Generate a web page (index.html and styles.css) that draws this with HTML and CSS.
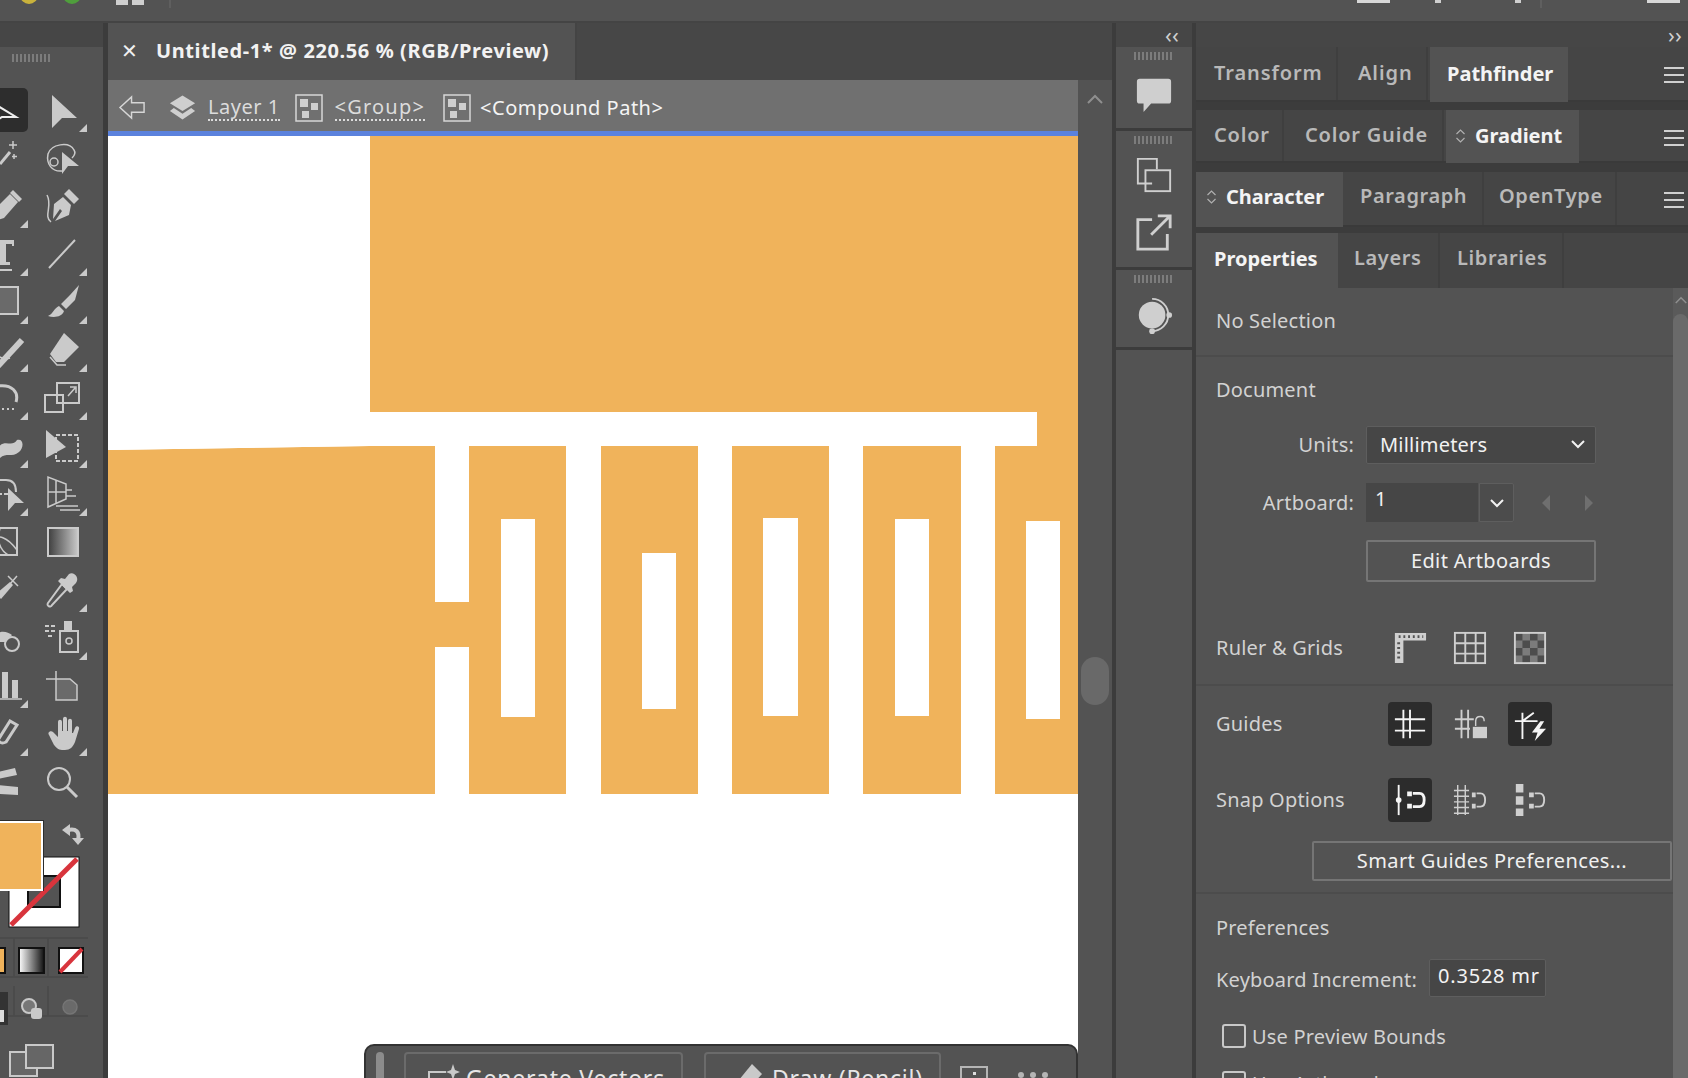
FILE: index.html
```html
<!DOCTYPE html>
<html lang="en">
<head>
  <meta charset="UTF-8" />
  <title>Untitled-1* @ 220.56 % (RGB/Preview)</title>
  <link rel="stylesheet" href="styles.css">
</head>
<body>
  <div class="topbar">
    <span class="light light-yellow"></span>
    <span class="light light-green"></span>
    <span class="top-blocks"><i></i><i></i></span>
    <span class="top-div"></span>
    <span class="top-spacer"></span>
    <span class="top-rect"></span>
    <span class="top-dot"></span>
    <span class="top-dot top-dot-2"></span>
    <span class="top-div top-div-2"></span>
    <span class="top-rect top-rect-last"></span>
  </div>

  <div class="main">
    <!-- tools -->
    <div class="toolbar">
      <div class="bar-head"></div>
      <div class="grip tool-grip"></div>
      <div class="tools">
        <div class="tool tool-on"><svg class="ico" viewBox="0 0 40 40"><path class="ln" d="M2 10 L30 27 L16 27 L2 36"/></svg></div>
        <div class="tool more"><svg class="ico" viewBox="0 0 40 40"><path class="fl" d="M10 5 L35 28 L20 28 L10 38Z"/></svg></div>

        <div class="tool"><svg class="ico" viewBox="0 0 40 40"><path class="ln thick" d="M12 26 L22 14"/><path class="ln thin" d="M25 3v8M21 7h8M26 16v5M24 18.500h5"/></svg></div>
        <div class="tool"><svg class="ico" viewBox="0 0 40 40"><path class="ln thin" d="M20 33 C10 34 4 26 6 16 C9 6 27 3 32 12 C34 15 32 18 30 20"/><circle class="ln thin" cx="12" cy="24" r="4"/><path class="fl" d="M20 14 L37 28 L26 28 L20 36Z"/></svg></div>

        <div class="tool more"><svg class="ico" viewBox="0 0 40 40"><path class="fl" d="M22 8 L30 16 L16 32 L2 36 L8 22Z"/><path class="fl" d="M25 4 L34 13 L31 16 L22 7Z"/></svg></div>
        <div class="tool"><svg class="ico" viewBox="0 0 40 40"><path class="fl" d="M21 11 L29 19 L27 29 L13 35 L20 25 L18 23 L11 33 L12 18Z"/><path class="fl" d="M27 3 L37 13 L32 18 L22 8Z"/><path class="ln thin" d="M9 36 C1 30 11 20 5 9"/></svg></div>

        <div class="tool more"><svg class="ico" viewBox="0 0 40 40"><path class="fl" d="M4 6h22v6h-2v-2h-6v18h4v3H6v-3h4V10H4Z"/><path class="ln" d="M0 36h24"/></svg></div>
        <div class="tool more"><svg class="ico" viewBox="0 0 40 40"><path class="ln" d="M7 34 L33 6"/></svg></div>

        <div class="tool more"><svg class="ico" viewBox="0 0 40 40"><rect class="grey-fill ln" x="0" y="5" width="30" height="27"/></svg></div>
        <div class="tool more"><svg class="ico" viewBox="0 0 40 40"><path class="fl" d="M37 3 L33 18 L24 27 L19 22 L28 13Z"/><path class="fl" d="M17 24 L22 29 C20 35 12 36 6 34 C11 32 12 26 17 24Z"/></svg></div>

        <div class="tool more"><svg class="ico" viewBox="0 0 40 40"><path class="wide-ln" d="M10 36 L34 10"/><path class="ln thin" d="M8 24 C12 28 16 30 22 28"/></svg></div>
        <div class="tool more"><svg class="ico" viewBox="0 0 40 40"><path class="fl" d="M22 3 L37 17 L22 32 L14 32 L8 24Z"/><path class="ln thin" d="M8 27 L15 35 H24"/></svg></div>

        <div class="tool more"><svg class="ico" viewBox="0 0 40 40"><path class="ln thick" d="M10 8 C24 6 31 14 28 24"/><path class="ln dotted" d="M26 31 H10"/></svg></div>
        <div class="tool more"><svg class="ico" viewBox="0 0 40 40"><rect class="ln" x="15" y="5" width="22" height="20"/><rect class="ln" x="3" y="17" width="18" height="17"/><path class="ln thin" d="M26 18 L33 10M28 9h6v6"/></svg></div>

        <div class="tool more"><svg class="ico" viewBox="0 0 40 40"><path class="fl" d="M10 22 C16 12 24 22 29 14 C36 12 36 22 31 26 C24 32 18 26 12 32Z"/></svg></div>
        <div class="tool more"><svg class="ico" viewBox="0 0 40 40"><rect class="ln dash" x="14" y="9" width="22" height="26"/><path class="fl" d="M4 4 L24 21 L4 32Z"/></svg></div>

        <div class="tool more"><svg class="ico" viewBox="0 0 40 40"><path class="ln" d="M8 6 H18 C26 6 28 12 28 18"/><path class="ln dash" d="M10 20 H22"/><path class="fl" d="M20 14 L36 29 L27 29 L20 37Z"/></svg></div>
        <div class="tool more"><svg class="ico" viewBox="0 0 40 40"><path class="ln thin" d="M6 3 V33 L24 25 V10Z M6 18 H24 M14 6 V30"/><path class="ln thin" d="M24 16h6M24 22h10M14 32h22M18 36h20"/></svg></div>

        <div class="tool"><svg class="ico" viewBox="0 0 40 40"><rect class="ln" x="0" y="6" width="29" height="27"/><path class="ln thin" d="M0 20 C10 10 20 16 29 28M12 7 C8 18 12 28 20 33"/></svg></div>
        <div class="tool"><svg class="ico" viewBox="0 0 40 40"><defs><linearGradient id="gt" x1="0" x2="1" y1="0" y2="0"><stop offset="0" stop-color="#3e3e3e"/><stop offset="1" stop-color="#c8c8c8"/></linearGradient></defs><rect class="grad-tool" x="6" y="6" width="30" height="28" fill="url(#gt)"/></svg></div>

        <div class="tool"><svg class="ico" viewBox="0 0 40 40"><path class="fl" d="M8 24 L22 12 L25 15 L13 29Z"/><path class="ln thin" d="M20 6 L30 16M29 6 L22 14"/></svg></div>
        <div class="tool more"><svg class="ico" viewBox="0 0 40 40"><path class="ln" d="M6 33 C4 36 9 38 10 35 L25 19 L20 14Z"/><path class="fl" d="M27 4 C32 1 38 8 34 13 L30 17 L31 21 L28 23 L16 11 L19 8 L23 9Z"/></svg></div>

        <div class="tool"><svg class="ico" viewBox="0 0 40 40"><path class="fl" d="M8 16 C14 12 20 14 24 17 L18 24 H8Z"/><circle class="ln" cx="24" cy="26" r="7"/></svg></div>
        <div class="tool more"><svg class="ico" viewBox="0 0 40 40"><path class="ln dash" d="M3 8h12M3 13h10M6 18h6"/><path class="fl" d="M22 3h8v9h-8Z"/><rect class="ln" x="18" y="13" width="18" height="21"/><circle class="ln thin" cx="27" cy="23" r="3"/></svg></div>

        <div class="tool more"><svg class="ico" viewBox="0 0 40 40"><path class="fl" d="M14 6h6v26h-6ZM24 14h6v18h-6Z"/><path class="ln thin" d="M8 33h26"/></svg></div>
        <div class="tool"><svg class="ico" viewBox="0 0 40 40"><path class="grey-fill" d="M14 13H28L35 19V34H14Z"/><path class="ln thin" d="M14 5V13H28L35 19V34H14V13M4 13H14"/></svg></div>

        <div class="tool more"><svg class="ico" viewBox="0 0 40 40"><path class="ln thick" d="M10 26 L22 7 L29 11 L18 28 C14 30 12 29 10 26Z"/></svg></div>
        <div class="tool more"><svg class="ico" viewBox="0 0 40 40"><path class="fl" d="M16 8c0-3 4-3 4 0v9h1V5c0-3 4-3 4 0v12h1V7c0-3 4-3 4 0v12l1 0 2-5c1-3 5-2 4 1l-4 13c-2 5-5 8-10 8h-3c-4 0-6-3-8-5L7 21c-2-3 2-5 4-3l5 5Z"/></svg></div>

        <div class="tool"><svg class="ico" viewBox="0 0 40 40"><path class="fl" d="M10 10 L27 6 L29 13 L10 17ZM10 23 L30 25 L30 33 L10 32Z"/></svg></div>
        <div class="tool"><svg class="ico" viewBox="0 0 40 40"><circle class="ln" cx="17" cy="17" r="11"/><path class="ln thick" d="M25 25 L35 35"/></svg></div>
      </div>

      <svg class="swatches" viewBox="0 0 103 258" width="103" height="258">
        <path class="swap-arrow" d="M68 10 C76 8 80 12 78 20"/>
        <path class="swap-head" d="M62 10 L70 4 V16Z M72 18 H84 L78 25Z"/>
        <rect x="9" y="37" width="70" height="70" fill="#fff" stroke="#111" stroke-width="1"/>
        <rect x="28" y="56" width="32" height="31" fill="#535353" stroke="#111" stroke-width="2"/>
        <path d="M11 105 L77 39" stroke="#d8343c" stroke-width="5"/>
        <rect x="-6" y="-1" width="50" height="72" fill="#2c2c2c"/>
        <rect x="-4" y="2" width="46" height="68" fill="#f0b35b" stroke="#fff" stroke-width="2"/>
        <path d="M0 118 H88 M0 157 H88 M0 196 H88 M14 118 V157 M48 118 V157 M14 166 V196 M48 166 V196" stroke="#4a4a4a" stroke-width="1.5"/>
        <rect x="-4" y="128" width="9" height="25" fill="#f0b35b" stroke="#111" stroke-width="2"/>
        <defs>
          <linearGradient id="gr" x1="0" x2="1" y1="0" y2="0">
            <stop offset="0" stop-color="#fff"/>
            <stop offset="1" stop-color="#111"/>
          </linearGradient>
        </defs>
        <rect x="19" y="128" width="25" height="25" fill="url(#gr)" stroke="#111" stroke-width="2"/>
        <rect x="59" y="128" width="24" height="25" fill="#fff" stroke="#111" stroke-width="2"/>
        <path d="M60 152 L82 129" stroke="#d8343c" stroke-width="4"/>
        <rect x="0" y="172" width="8" height="33" fill="#333"/>
        <rect x="0" y="190" width="4" height="12" fill="#ddd"/>
        <circle cx="29" cy="186" r="7" fill="#777" stroke="#c9c9c9" stroke-width="2"/>
        <rect x="31" y="188" width="11" height="11" rx="3" fill="#c9c9c9"/>
        <circle cx="70" cy="187" r="7" fill="#6a6a6a" stroke="#757575" stroke-width="1.5"/>
        <rect x="10" y="232" width="27" height="24" fill="#666" stroke="#c9c9c9" stroke-width="2"/>
        <rect x="26" y="225" width="27" height="23" fill="#666" stroke="#c9c9c9" stroke-width="2"/>
      </svg>
    </div>

    <!-- document -->
    <div class="doc">
      <div class="doc-tabs">
        <div class="doc-tab">
          <span class="doc-close">&#x2715;</span>
          <span class="doc-title">Untitled-1* @ 220.56 % (RGB/Preview)</span>
        </div>
      </div>
      <div class="doc-body">
        <div class="doc-left">
          <div class="crumbs">
            <svg class="crumb-back" viewBox="0 0 30 28"><path d="M2 14 L14 3 V9 H27 V19 H14 V25Z"/></svg>
            <svg class="crumb-layers" viewBox="0 0 30 30"><path class="c-fill" d="M15 2 L28 10 L15 18 L2 10Z"/><path class="c-fill" d="M6 15 L15 21 L24 15 L28 18 L15 27 L2 18Z"/></svg>
            <span class="crumb-link crumb-layer">Layer 1</span>
            <svg class="crumb-box" viewBox="0 0 28 28"><rect class="c-line" x="1" y="1" width="26" height="26"/><rect class="c-fill" x="5" y="5" width="8" height="8"/><rect class="c-fill" x="16" y="9" width="7" height="7"/><rect class="c-fill" x="7" y="17" width="7" height="7"/></svg>
            <span class="crumb-link crumb-group">&lt;Group&gt;</span>
            <svg class="crumb-box" viewBox="0 0 28 28"><rect class="c-line" x="1" y="1" width="26" height="26"/><rect class="c-fill" x="5" y="5" width="8" height="8"/><rect class="c-fill" x="16" y="9" width="7" height="7"/><rect class="c-fill" x="7" y="17" width="7" height="7"/></svg>
            <span class="crumb-now">&lt;Compound Path&gt;</span>
          </div>
          <div class="canvas">
            <svg class="art" viewBox="108 136 970 942" width="970" height="942">
              <path class="orange" d="M370 136H1078V794H108V450L370 446Z"/>
              <g class="paper">
                <rect x="370" y="412" width="667" height="34"/>
                <path d="M108 446H370V446L108 450Z"/>
                <rect x="435" y="446" width="34" height="156"/>
                <rect x="435" y="647" width="34" height="147"/>
                <rect x="566" y="446" width="35" height="348"/>
                <rect x="698" y="446" width="34" height="348"/>
                <rect x="829" y="446" width="34" height="348"/>
                <rect x="961" y="446" width="34" height="348"/>
                <rect x="501" y="519" width="34" height="198"/>
                <rect x="642" y="553" width="34" height="156"/>
                <rect x="763" y="518" width="35" height="198"/>
                <rect x="895" y="519" width="34" height="197"/>
                <rect x="1026" y="521" width="34" height="198"/>
              </g>
            </svg>
            <div class="float-bar">
              <span class="float-handle"></span>
              <div class="float-btn float-gen">
                <svg class="float-ico" viewBox="0 0 34 30"><path class="ln" d="M20 8H3V30H24V16"/><path class="fl" d="M27 0l2 6 5 2-5 2-2 6-2-6-5-2 5-2Z"/></svg>
                <span>Generate Vectors</span>
              </div>
              <div class="float-btn float-draw">
                <svg class="float-ico" viewBox="0 0 34 30"><path class="fl" d="M20 0 L30 10 L12 30 L2 22Z"/></svg>
                <span>Draw (Pencil)</span>
              </div>
              <span class="float-frame"><i></i></span>
              <span class="float-dots"><i></i><i></i><i></i></span>
            </div>
          </div>
        </div>
        <div class="doc-scroll">
          <svg class="caret" viewBox="0 0 16 10"><path d="M1 9 L8 2 L15 9"/></svg>
          <div class="doc-thumb"></div>
        </div>
      </div>
    </div>

    <!-- icon dock -->
    <div class="dock">
      <div class="bar-head bar-left">&#x2039;&#x2039;</div>
      <div class="dock-sec dock-a">
        <div class="grip"></div>
        <svg class="dock-ico" viewBox="0 0 40 40"><path class="fl" d="M5 3H35Q38 3 38 6V26Q38 29 35 29H17L9 38V29H5Q2 29 2 26V6Q2 3 5 3Z"/></svg>
      </div>
      <div class="dock-sec dock-b">
        <div class="grip"></div>
        <svg class="dock-ico dock-ico-1" viewBox="0 0 40 40"><path class="ln" d="M18 29H3V3H23V14"/><rect class="ln" x="11" y="15" width="26" height="22"/></svg>
        <svg class="dock-ico dock-ico-2" viewBox="0 0 40 40"><path class="ln thick" d="M18 7H3V38H34V22"/><path class="ln thick" d="M17 23 L36 4M24 3H37V16"/></svg>
      </div>
      <div class="dock-sec dock-c">
        <div class="grip"></div>
        <svg class="dock-ico dock-ico-3" viewBox="0 0 40 40"><circle class="fl" cx="18" cy="20" r="14"/><path class="ln" d="M18 3 A17 17 0 0 1 35 20 A17 17 0 0 1 18 37"/><circle class="fl" cx="36" cy="20" r="3"/><circle class="fl" cx="18" cy="37" r="3"/></svg>
      </div>
      <div class="dock-sec dock-d"></div>
    </div>

    <!-- panels -->
    <div class="panels">
      <div class="bar-head bar-right">&#x203A;&#x203A;</div>

      <div class="tabrow row-1">
        <div class="tab tab-transform">Transform</div>
        <div class="tab tab-align">Align</div>
        <div class="tab tab-on tab-pathfinder">Pathfinder</div>
        <div class="burger"><i></i><i></i><i></i></div>
      </div>
      <div class="tabrow row-2">
        <div class="tab tab-color">Color</div>
        <div class="tab tab-guide">Color Guide</div>
        <div class="tab tab-on tab-gradient"><svg class="updown" viewBox="0 0 10 16"><path d="M1 6 L5 2 L9 6M1 10 L5 14 L9 10"/></svg>Gradient</div>
        <div class="burger"><i></i><i></i><i></i></div>
      </div>
      <div class="tabrow row-3">
        <div class="tab tab-on tab-character"><svg class="updown" viewBox="0 0 10 16"><path d="M1 6 L5 2 L9 6M1 10 L5 14 L9 10"/></svg>Character</div>
        <div class="tab tab-paragraph">Paragraph</div>
        <div class="tab tab-opentype">OpenType</div>
        <div class="burger"><i></i><i></i><i></i></div>
      </div>
      <div class="tabrow row-4">
        <div class="tab tab-on tab-properties">Properties</div>
        <div class="tab tab-layers">Layers</div>
        <div class="tab tab-libraries">Libraries</div>
      </div>

      <div class="props">
        <div class="props-main">
          <div class="sec sec-none">No Selection</div>

          <div class="sec sec-doc">
            <div class="sec-title">Document</div>
            <div class="form-row units-row">
              <span class="form-label">Units:</span>
              <div class="select">Millimeters<svg class="chev" viewBox="0 0 16 10"><path d="M2 2 L8 8 L14 2"/></svg></div>
            </div>
            <div class="form-row board-row">
              <span class="form-label">Artboard:</span>
              <div class="board-input">1</div>
              <div class="board-drop"><svg class="chev" viewBox="0 0 16 10"><path d="M2 2 L8 8 L14 2"/></svg></div>
              <span class="tri tri-l"></span>
              <span class="tri tri-r"></span>
            </div>
            <div class="btn edit-btn">Edit Artboards</div>
            <div class="icon-row ruler-row">
              <span class="icon-label">Ruler &amp; Grids</span>
              <span class="ibtn"><svg viewBox="0 0 36 36"><path class="fl" d="M2 2H35V10H11V34H2Z"/><path class="dark-ticks" d="M6 6H32M6 12V32"/></svg></span>
              <span class="ibtn"><svg viewBox="0 0 36 36"><rect class="ln" x="2" y="2" width="32" height="32"/><path class="ln" d="M2 13H34M2 24H34M13 2V34M24 2V34"/></svg></span>
              <span class="ibtn"><svg viewBox="0 0 36 36"><rect class="checker-bg" x="2" y="2" width="32" height="32"/><path class="checker" d="M2 2h8v8H2ZM18 2h8v8h-8ZM10 10h8v8h-8ZM26 10h8v8h-8ZM2 18h8v8H2ZM18 18h8v8h-8ZM10 26h8v8h-8ZM26 26h8v8h-8Z"/><rect class="ln" x="2" y="2" width="32" height="32"/></svg></span>
            </div>
          </div>

          <div class="sec sec-guides">
            <div class="icon-row guides-row">
              <span class="icon-label">Guides</span>
              <span class="ibtn ibtn-on"><svg viewBox="0 0 36 36"><path class="ln" d="M2 13H34M2 25H34M11 3V33M18 3V33"/></svg></span>
              <span class="ibtn"><svg viewBox="0 0 36 36"><path class="ln" d="M2 13H22M2 23H18M9 3V33M16 3V33"/><path class="ln thin" d="M24 20V15Q24 10 29 10Q33 10 33 15"/><rect class="fl" x="21" y="21" width="15" height="12"/></svg></span>
              <span class="ibtn ibtn-on"><svg viewBox="0 0 36 36"><path class="ln" d="M10 6V34M2 15H26M10 15L22 6"/><path class="fl" d="M29 15L20 27H26L23 36L35 23H28L33 15Z"/></svg></span>
            </div>
            <div class="icon-row snap-row">
              <span class="icon-label">Snap Options</span>
              <span class="ibtn ibtn-on"><svg viewBox="0 0 36 36"><path class="ln" d="M6 2V34"/><circle class="fl" cx="6" cy="18" r="3"/><path class="ln thick" d="M21 11H28Q33 11 33 18Q33 25 28 25H21"/><path class="fl" d="M15 9H20V14H15ZM15 22H20V27H15Z"/></svg></span>
              <span class="ibtn"><svg viewBox="0 0 36 36"><path class="ln thin" d="M5 2V34M13 2V34M1 8H17M1 14H17M1 20H17M1 26H17M1 32H17"/><path class="ln" d="M25 11H29Q34 11 34 18Q34 25 29 25H25"/><path class="fl" d="M20 10H24V15H20ZM20 22H24V27H20Z"/></svg></span>
              <span class="ibtn"><svg viewBox="0 0 36 36"><path class="fl" d="M3 1H11V10H3ZM3 14H11V23H3ZM3 27H11V35H3Z"/><path class="ln" d="M23 11H28Q33 11 33 18Q33 25 28 25H23"/><path class="fl" d="M17 10H22V15H17ZM17 22H22V27H17Z"/></svg></span>
            </div>
            <div class="btn smart-btn">Smart Guides Preferences...</div>
          </div>

          <div class="sec sec-prefs">
            <div class="sec-title">Preferences</div>
            <div class="key-row">
              <span class="key-label">Keyboard Increment:</span>
              <div class="key-input">0.3528 mr</div>
            </div>
            <div class="check-row">
              <span class="check"></span>
              <span>Use Preview Bounds</span>
            </div>
            <div class="check-row check-next">
              <span class="check"></span>
              <span>Use Artboard</span>
            </div>
          </div>
        </div>
        <div class="props-scroll">
          <svg class="caret caret-small" viewBox="0 0 16 10"><path d="M1 9 L8 2 L15 9"/></svg>
          <div class="props-thumb"></div>
        </div>
      </div>
    </div>
  </div>
</body>
</html>
```

FILE: styles.css
```css
* {
  box-sizing: border-box;
}

html, body {
  margin: 0;
  height: 100%;
}

body {
  width: 1688px;
  height: 1078px;
  overflow: hidden;
  background: #3c3c3c;
  font-family: "Noto Sans", sans-serif;
  font-size: 20px;
  letter-spacing: .2px;
  color: #d2d2d2;
}

/* shared svg bits */
.ln {
  fill: none;
  stroke: currentColor;
  stroke-width: 2;
}

.thin {
  stroke-width: 1.5;
}

.thick {
  stroke-width: 3;
}

.wide-ln {
  fill: none;
  stroke: currentColor;
  stroke-width: 6;
}

.dotted {
  stroke-dasharray: 2 3;
}

.dash {
  stroke-dasharray: 4 2;
}

.fl {
  fill: currentColor;
}

/* top bar */
.topbar {
  height: 23px;
  background: #535353;
  border-bottom: 2px solid #444;
  display: flex;
  align-items: flex-start;
  overflow: hidden;
}

.light {
  width: 18px;
  height: 18px;
  border-radius: 50%;
  margin-top: -14px;
}

.light-yellow {
  background: #c9b23c;
  margin-left: 20px;
}

.light-green {
  background: #4f9e3c;
  margin-left: 25px;
}

.top-blocks {
  display: flex;
  gap: 4px;
  margin-left: 35px;
}

.top-blocks i {
  width: 12px;
  height: 5px;
  background: #cfcfcf;
}

.top-div {
  width: 2px;
  height: 8px;
  background: #5f5f5f;
  margin-left: 25px;
}

.top-div-2 {
  margin-left: 19px;
}

.top-spacer {
  flex: 1;
}

.top-rect {
  width: 33px;
  height: 3px;
  background: #d8d8d8;
}

.top-dot {
  width: 6px;
  height: 3px;
  background: #cfcfcf;
  margin-left: 45px;
}

.top-dot-2 {
  margin-left: 74px;
}

.top-rect-last {
  margin-left: 105px;
  margin-right: 8px;
}

.main {
  display: flex;
  height: 1055px;
  overflow: hidden;
}

.bar-head {
  height: 24px;
  background: #464646;
}

.grip {
  width: 40px;
  height: 8px;
  background: repeating-linear-gradient(90deg, #7c7c7c 0 2px, transparent 2px 4px);
}

/* tools */
.toolbar {
  width: 103px;
  margin-right: 5px;
  background: #535353;
  overflow: hidden;
  color: #cacaca;
}

.tool-grip {
  margin: 7px 0 0 12px;
}

.tools {
  display: grid;
  grid-template-columns: 50px 50px;
  grid-auto-rows: 48px;
  column-gap: 4px;
  margin: 24px 0 0 -17px;
  width: 104px;
}

.tool {
  position: relative;
  display: flex;
  align-items: center;
  justify-content: center;
}

.tool-on {
  background: #2d2d2d;
  border-radius: 5px;
  margin: 2px 5px 2px 0;
  color: #eee;
}

.ico {
  width: 40px;
  height: 40px;
  overflow: visible;
}

.more::after {
  content: "";
  position: absolute;
  right: 0;
  bottom: 2px;
  border-style: solid;
  border-width: 0 0 8px 8px;
  border-color: transparent transparent #cacaca transparent;
}

.tool:nth-child(odd).more::after {
  right: 5px;
}

.grad-tool {
  stroke: #cacaca;
  stroke-width: 2;
}

.grey-fill {
  fill: #6a6a6a;
}

.swatches {
  display: block;
  margin-top: 14px;
}

.swap-arrow {
  fill: none;
  stroke: #cacaca;
  stroke-width: 4;
}

.swap-head {
  fill: #cacaca;
}

/* document */
.doc {
  width: 1004px;
  display: flex;
  flex-direction: column;
}

.doc-tabs {
  height: 57px;
  background: #474747;
  display: flex;
}

.doc-tab {
  width: 469px;
  background: #535353;
  display: flex;
  align-items: center;
  padding-bottom: 2px;
  border-right: 2px solid #444;
}

.doc-close {
  width: 48px;
  padding-right: 4px;
  text-align: center;
  font-size: 20px;
  color: #f0f0f0;
}

.doc-title {
  font-weight: 700;
  font-size: 20px;
  letter-spacing: .6px;
  color: #f2f2f2;
  white-space: nowrap;
}

.doc-body {
  flex: 1;
  display: flex;
  min-height: 0;
}

.doc-left {
  width: 970px;
  display: flex;
  flex-direction: column;
}

.crumbs {
  flex: none;
  height: 56px;
  background: #707070;
  border-bottom: 5px solid #5b82dd;
  display: flex;
  align-items: center;
  padding: 4px 0 0 10px;
  color: #dcdcdc;
}

.crumb-back {
  width: 29px;
  height: 27px;
  fill: none;
  stroke: #d6d6d6;
  stroke-width: 1.5;
}

.crumb-layers {
  width: 29px;
  height: 30px;
  margin-left: 21px;
}

.c-fill {
  fill: #cfcfcf;
}

.c-line {
  fill: none;
  stroke: #d6d6d6;
  stroke-width: 1.5;
}

.crumb-link {
  border-bottom: 2px dotted #dcdcdc;
  line-height: 25px;
}

.crumb-layer {
  margin-left: 11px;
  letter-spacing: .5px;
}

.crumb-box {
  width: 28px;
  height: 28px;
  margin-left: 15px;
}

.crumb-group {
  margin-left: 12px;
  letter-spacing: 1.2px;
}

.crumb-group + .crumb-box {
  margin-left: 18px;
}

.crumb-now {
  margin-left: 9px;
  letter-spacing: .5px;
  color: #f4f4f4;
}

.canvas {
  flex: 1;
  min-height: 0;
  position: relative;
  overflow: hidden;
  background: #fff;
}

.art {
  display: block;
}

.orange {
  fill: #f0b35b;
}

.paper {
  fill: #fff;
}

/* floating task bar, runs off the bottom */
.float-bar {
  position: absolute;
  left: 256px;
  right: 0;
  top: 908px;
  height: 60px;
  background: #535353;
  border: 2px solid #333;
  border-radius: 10px;
  display: flex;
  align-items: flex-start;
  padding-top: 6px;
  color: #e6e6e6;
}

.float-handle {
  width: 8px;
  height: 40px;
  margin-left: 10px;
  border-radius: 4px;
  background: #8c8c8c;
}

.float-btn {
  height: 50px;
  border: 2px solid #6b6b6b;
  border-radius: 4px;
  display: flex;
  align-items: flex-start;
  padding-top: 9px;
  line-height: 30px;
  white-space: nowrap;
  font-size: 23px;
  letter-spacing: .8px;
}

.float-gen {
  width: 279px;
  margin-left: 20px;
  padding-left: 20px;
}

.float-draw {
  width: 237px;
  margin-left: 21px;
  padding-left: 26px;
}

.float-ico {
  width: 34px;
  height: 30px;
  margin: 1px 6px 0 0;
  color: #c9c9c9;
}

.float-frame {
  width: 28px;
  height: 30px;
  margin: 14px 0 0 19px;
  border: 2px solid #b5b5b5;
  display: flex;
  justify-content: center;
  padding-top: 4px;
}

.float-frame i {
  width: 3px;
  height: 3px;
  background: #ddd;
}

.float-dots {
  display: flex;
  gap: 6px;
  margin: 20px 0 0 30px;
}

.float-dots i {
  width: 6px;
  height: 6px;
  border-radius: 50%;
  background: #b5b5b5;
}

.doc-scroll {
  width: 34px;
  background: #535353;
  display: flex;
  flex-direction: column;
  align-items: center;
}

.caret {
  width: 16px;
  height: 10px;
  margin-top: 14px;
  fill: none;
  stroke: #8f8f8f;
  stroke-width: 2;
}

.doc-thumb {
  width: 28px;
  height: 48px;
  margin-top: 553px;
  border-radius: 14px;
  background: #696969;
}

/* icon dock */
.dock {
  width: 76px;
  margin-left: 4px;
  display: flex;
  flex-direction: column;
  color: #cfcfcf;
}

.bar-left {
  flex: none;
  line-height: 22px;
  text-align: right;
  padding-right: 13px;
  font-size: 22px;
}

.dock-sec {
  background: #535353;
  display: flex;
  flex-direction: column;
  align-items: center;
  padding-top: 5px;
  margin-bottom: 3px;
}

.dock-a {
  height: 81px;
}

.dock-b {
  height: 136px;
}

.dock-c {
  height: 77px;
}

.dock-d {
  flex: 1;
  margin-bottom: 0;
}

.dock-ico {
  width: 38px;
  height: 38px;
  margin-top: 16px;
  overflow: visible;
}

.dock-ico-1 {
  margin-top: 12px;
}

.dock-ico-2 {
  margin-top: 19px;
}

.dock-ico-3 {
  margin-top: 13px;
}

/* panels */
.panels {
  width: 492px;
  margin-left: 4px;
  display: flex;
  flex-direction: column;
}

.bar-right {
  flex: none;
  line-height: 22px;
  text-align: right;
  padding-right: 6px;
  font-size: 22px;
  color: #d0d0d0;
}

.tabrow {
  flex: none;
  display: flex;
  position: relative;
  background: #454545;
  border-bottom: 2px solid #3a3a3a;
  color: #b9b9b9;
  font-weight: 600;
  letter-spacing: .6px;
}

.row-1 {
  height: 55px;
  margin-bottom: 8px;
  letter-spacing: .9px;
}

.row-2 {
  height: 53px;
  margin-bottom: 9px;
  letter-spacing: .8px;
}

.row-3 {
  height: 55px;
  margin-bottom: 6px;
}

.row-4 {
  height: 55px;
  border-bottom: 0;
}

.tab {
  display: flex;
  align-items: center;
  border-right: 2px solid #3f3f3f;
  margin-right: 2px;
  padding-left: 18px;
  padding-bottom: 2px;
  white-space: nowrap;
}

.row-3 .tab {
  padding-bottom: 6px;
}

.row-4 .tab {
  padding-bottom: 6px;
}

.tab-on,
.row-1 .tab-on,
.row-2 .tab-on {
  background: #535353;
  color: #f4f4f4;
  font-weight: 700;
  letter-spacing: 0;
  border-right: 0;
  margin-bottom: -2px;
}

.tab-transform { width: 142px; }
.tab-align { width: 88px; padding-left: 18px; }
.tab-pathfinder { width: 138px; padding-left: 17px; }
.tab-color { width: 88px; }
.tab-guide { width: 158px; padding-left: 19px; }
.tab-gradient { width: 133px; padding-left: 9px; }
.tab-character { width: 147px; padding-left: 10px; }
.tab-paragraph { width: 139px; padding-left: 15px; }
.tab-opentype { width: 131px; padding-left: 13px; }
.tab-properties { width: 142px; }
.tab-layers { width: 100px; padding-left: 14px; }
.tab-libraries { width: 122px; padding-left: 15px; }

.updown {
  width: 11px;
  height: 16px;
  margin-right: 9px;
  fill: none;
  stroke: #b0b0b0;
  stroke-width: 1.2;
}

.burger {
  position: absolute;
  right: 4px;
  top: 20px;
  width: 20px;
  display: flex;
  flex-direction: column;
  gap: 5px;
}

.burger i {
  height: 2px;
  background: #d0d0d0;
}

.props {
  flex: 1;
  display: flex;
  background: #535353;
  min-height: 0;
  overflow: hidden;
}

.props-main {
  width: 477px;
}

.props-scroll {
  width: 15px;
  background: #5a5a5a;
  display: flex;
  flex-direction: column;
  align-items: center;
}

.caret-small {
  width: 12px;
  height: 8px;
  margin-top: 8px;
}

.props-thumb {
  width: 15px;
  flex: 1;
  margin-top: 10px;
  border-radius: 8px 8px 0 0;
  background: #6a6a6a;
}

.sec {
  border-bottom: 2px solid #4c4c4c;
  padding-left: 20px;
}

.sec-none {
  height: 69px;
  line-height: 66px;
}

.sec-doc {
  height: 329px;
  padding-left: 0;
}

.sec-title {
  padding-left: 20px;
  line-height: 28px;
  padding-top: 19px;
  height: 48px;
}

.form-row {
  display: flex;
  align-items: center;
  height: 38px;
}

.units-row {
  margin-top: 21px;
}

.board-row {
  margin-top: 19px;
  height: 39px;
}

.form-label {
  width: 158px;
  margin-right: 12px;
  padding-bottom: 1px;
  text-align: right;
}

.select {
  width: 230px;
  height: 38px;
  background: #464646;
  border: 1px solid #5e5e5e;
  border-radius: 2px;
  display: flex;
  align-items: center;
  justify-content: space-between;
  padding: 0 9px 2px 13px;
  color: #f2f2f2;
}

.chev {
  width: 16px;
  height: 10px;
  fill: none;
  stroke: #f2f2f2;
  stroke-width: 2;
}

.board-input {
  width: 112px;
  height: 39px;
  background: #464646;
  color: #f2f2f2;
  padding-left: 9px;
  line-height: 32px;
}

.board-drop {
  width: 35px;
  height: 39px;
  margin-left: 1px;
  border: 1px solid #5e5e5e;
  background: #4c4c4c;
  border-radius: 0 2px 2px 0;
  display: flex;
  align-items: center;
  justify-content: center;
}

.tri {
  width: 0;
  height: 0;
  border-style: solid;
}

.tri-l {
  margin-left: 28px;
  border-width: 8px 8px 8px 0;
  border-color: transparent #6f6f6f transparent transparent;
}

.tri-r {
  margin-left: 35px;
  border-width: 8px 0 8px 8px;
  border-color: transparent transparent transparent #6f6f6f;
}

.btn {
  border: 2px solid #757575;
  border-radius: 2px;
  display: flex;
  align-items: center;
  justify-content: center;
  padding-bottom: 2px;
  letter-spacing: .4px;
  color: #f0f0f0;
}

.edit-btn {
  width: 230px;
  height: 42px;
  margin: 18px 0 0 170px;
}

.icon-row {
  display: flex;
  align-items: center;
  height: 44px;
  padding-left: 20px;
}

.ruler-row {
  margin-top: 44px;
}

.icon-label {
  width: 172px;
  padding-bottom: 2px;
}

.ibtn {
  width: 44px;
  height: 44px;
  margin-right: 16px;
  border-radius: 4px;
  display: flex;
  align-items: center;
  justify-content: center;
  color: #cfcfcf;
}

.ibtn svg {
  width: 34px;
  height: 34px;
}

.ibtn-on {
  background: #2c2c2c;
  color: #f5f5f5;
}

.dark-ticks {
  fill: none;
  stroke: #535353;
  stroke-width: 3;
  stroke-dasharray: 2 3;
}

.checker-bg {
  fill: #7c7c7c;
}

.checker {
  fill: #4d4d4d;
}

.sec-guides {
  height: 208px;
  padding: 16px 0 0;
}

.snap-row {
  margin-top: 32px;
}

.smart-btn {
  width: 360px;
  height: 40px;
  margin: 19px 0 0 116px;
}

.sec-prefs {
  border-bottom: 0;
  padding-left: 0;
}

.sec-prefs .sec-title {
  padding-top: 20px;
}

.key-row {
  display: flex;
  align-items: flex-start;
  margin-top: 17px;
  padding-left: 20px;
}

.key-label {
  width: 213px;
  line-height: 28px;
  margin-top: 7px;
}

.key-input {
  width: 117px;
  height: 38px;
  background: #464646;
  border: 1px solid #5e5e5e;
  border-radius: 2px;
  padding-left: 8px;
  line-height: 32px;
  letter-spacing: .8px;
  color: #f4f4f4;
  overflow: hidden;
  white-space: nowrap;
}

.check-row {
  display: flex;
  align-items: center;
  height: 24px;
  margin: 28px 0 0 26px;
  padding-bottom: 2px;
  gap: 6px;
}

.check-next {
  margin-top: 23px;
}

.check {
  flex: none;
  width: 24px;
  height: 24px;
  border: 2px solid #c8c8c8;
  border-radius: 3px;
}
```
